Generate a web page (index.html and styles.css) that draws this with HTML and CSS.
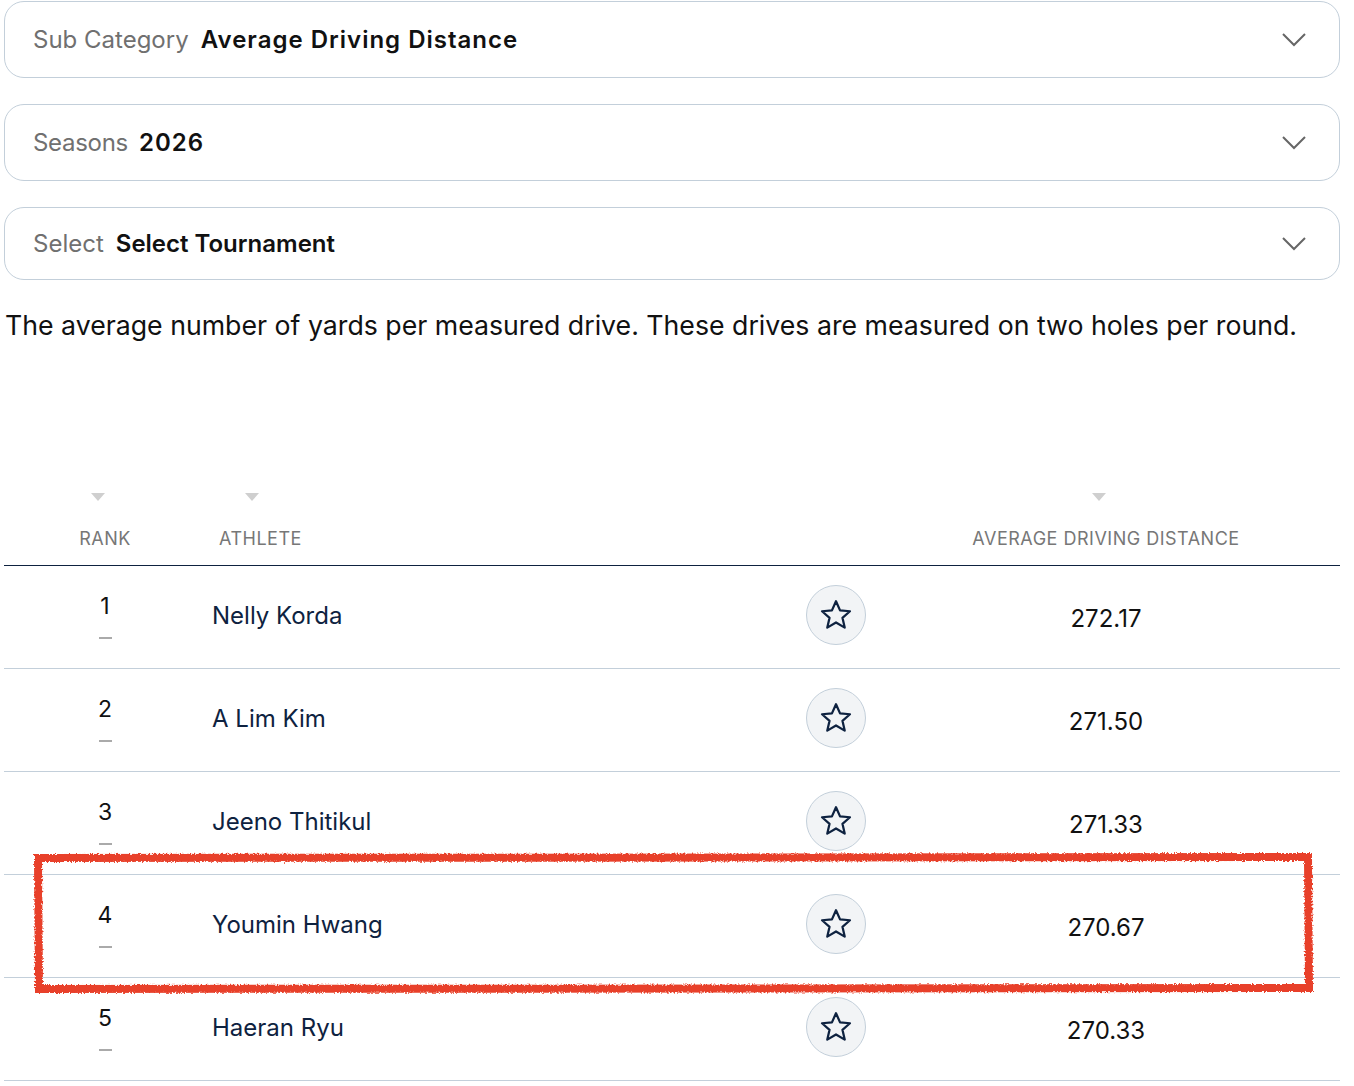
FILE: index.html
```html
<!DOCTYPE html>
<html>
<head>
<meta charset="utf-8">
<link rel="stylesheet" href="styles.css">
</head>
<body>
<div class="page">
  <div class="select s1">
    <span class="sel-label">Sub Category</span>
    <span class="sel-value">Average Driving Distance</span>
    <svg class="chev" viewBox="0 0 24 14" width="24" height="14"><path d="M1 1 L12 12 L23 1" fill="none" stroke="#666" stroke-width="2"/></svg>
  </div>
  <div class="select s2">
    <span class="sel-label">Seasons</span>
    <span class="sel-value">2026</span>
    <svg class="chev" viewBox="0 0 24 14" width="24" height="14"><path d="M1 1 L12 12 L23 1" fill="none" stroke="#666" stroke-width="2"/></svg>
  </div>
  <div class="select s3">
    <span class="sel-label">Select</span>
    <span class="sel-value tight">Select Tournament</span>
    <svg class="chev" viewBox="0 0 24 14" width="24" height="14"><path d="M1 1 L12 12 L23 1" fill="none" stroke="#666" stroke-width="2"/></svg>
  </div>
  <p class="desc">The average number of yards per measured drive. These drives are measured on two holes per round.</p>

  <div class="table">
    <div class="thead">
      <div class="th th-rank"><span class="tri"></span><span class="th-text">RANK</span></div>
      <div class="th th-name"><span class="tri"></span><span class="th-text">ATHLETE</span></div>
      <div class="th th-fav"></div>
      <div class="th th-val"><span class="tri"></span><span class="th-text">AVERAGE DRIVING DISTANCE</span></div>
    </div>
    <div class="row">
      <div class="cell rank"><span class="num">1</span><span class="dash"></span></div>
      <div class="cell name">Nelly Korda</div>
      <div class="cell fav"><span class="star-btn"><svg viewBox="0 0 24 24" width="36" height="36"><path d="M12 2.8 L14.7 8.9 L21.3 9.5 L16.3 13.9 L17.8 20.4 L12 17 L6.2 20.4 L7.7 13.9 L2.7 9.5 L9.3 8.9 Z" fill="none" stroke="#0e2240" stroke-width="1.5" stroke-linejoin="round"/></svg></span></div>
      <div class="cell val">272.17</div>
    </div>
    <div class="row">
      <div class="cell rank"><span class="num">2</span><span class="dash"></span></div>
      <div class="cell name">A Lim Kim</div>
      <div class="cell fav"><span class="star-btn"><svg viewBox="0 0 24 24" width="36" height="36"><path d="M12 2.8 L14.7 8.9 L21.3 9.5 L16.3 13.9 L17.8 20.4 L12 17 L6.2 20.4 L7.7 13.9 L2.7 9.5 L9.3 8.9 Z" fill="none" stroke="#0e2240" stroke-width="1.5" stroke-linejoin="round"/></svg></span></div>
      <div class="cell val">271.50</div>
    </div>
    <div class="row">
      <div class="cell rank"><span class="num">3</span><span class="dash"></span></div>
      <div class="cell name">Jeeno Thitikul</div>
      <div class="cell fav"><span class="star-btn"><svg viewBox="0 0 24 24" width="36" height="36"><path d="M12 2.8 L14.7 8.9 L21.3 9.5 L16.3 13.9 L17.8 20.4 L12 17 L6.2 20.4 L7.7 13.9 L2.7 9.5 L9.3 8.9 Z" fill="none" stroke="#0e2240" stroke-width="1.5" stroke-linejoin="round"/></svg></span></div>
      <div class="cell val">271.33</div>
    </div>
    <div class="row">
      <div class="cell rank"><span class="num">4</span><span class="dash"></span></div>
      <div class="cell name">Youmin Hwang</div>
      <div class="cell fav"><span class="star-btn"><svg viewBox="0 0 24 24" width="36" height="36"><path d="M12 2.8 L14.7 8.9 L21.3 9.5 L16.3 13.9 L17.8 20.4 L12 17 L6.2 20.4 L7.7 13.9 L2.7 9.5 L9.3 8.9 Z" fill="none" stroke="#0e2240" stroke-width="1.5" stroke-linejoin="round"/></svg></span></div>
      <div class="cell val">270.67</div>
    </div>
    <div class="row">
      <div class="cell rank"><span class="num">5</span><span class="dash"></span></div>
      <div class="cell name">Haeran Ryu</div>
      <div class="cell fav"><span class="star-btn"><svg viewBox="0 0 24 24" width="36" height="36"><path d="M12 2.8 L14.7 8.9 L21.3 9.5 L16.3 13.9 L17.8 20.4 L12 17 L6.2 20.4 L7.7 13.9 L2.7 9.5 L9.3 8.9 Z" fill="none" stroke="#0e2240" stroke-width="1.5" stroke-linejoin="round"/></svg></span></div>
      <div class="cell val">270.33</div>
    </div>
  </div>

  <svg class="annot" width="1300" height="156" viewBox="0 0 1300 156">
    <defs>
      <filter id="rough" x="-5%" y="-20%" width="110%" height="140%">
        <feTurbulence type="fractalNoise" baseFrequency="0.6" numOctaves="2" seed="3"/>
        <feDisplacementMap in="SourceGraphic" scale="4"/>
      </filter>
    </defs>
    <path d="M9 10 L1279 9 L1280 140 L10 141 Z" fill="none" stroke="#e8402a" stroke-width="8" filter="url(#rough)"/>
  </svg>
</div>
</body>
</html>
```
FILE: styles.css
```css
* { box-sizing: border-box; }
body {
  margin: 0;
  background: #fff;
  font-family: Inter, "Noto Sans", sans-serif;
  color: #111;
}
.page {
  position: relative;
  padding: 1px 14px 0 4px;
}
.select {
  display: flex;
  align-items: center;
  height: 77px;
  border: 1px solid #c3cfda;
  border-radius: 20px;
  padding: 0 33px 0 28px;
  margin-bottom: 26px;
}
.select.s3 { height: 73px; margin-bottom: 28px; }
.sel-label {
  font-size: 24px;
  color: #707070;
  margin-right: 12px;
}
.s2 .sel-label { letter-spacing: -0.3px; margin-right: 11px; }
.sel-value {
  font-size: 24px;
  font-weight: 600;
  letter-spacing: 1px;
  color: #111;
}
.sel-value.tight { letter-spacing: 0; }
.chev { margin-left: auto; }
.desc {
  margin: 0 0 0 1px;
  font-size: 26.7px;
  line-height: 34px;
  color: #111;
}
.table { margin-top: 128px; }
.thead {
  display: grid;
  grid-template-columns: 202px 594px 72px 1fr;
  height: 96px;
  border-bottom: 1.5px solid #0e2240;
}
.th {
  display: flex;
  flex-direction: column;
  align-items: center;
  padding-top: 23px;
}
.th-name { align-items: flex-start; padding-left: 13px; }
.th-name .tri { margin-left: 26px; }
.tri {
  width: 0; height: 0;
  border-left: 7px solid transparent;
  border-right: 7px solid transparent;
  border-top: 8px solid #cfcfcf;
  margin-bottom: 27px;
}
.th-rank .tri { margin-right: 15px; }
.th-val .tri { margin-right: 15px; }
.th-text {
  font-size: 18px;
  color: #777;
  letter-spacing: 0.5px;
}
.row {
  display: grid;
  grid-template-columns: 202px 594px 72px 1fr;
  height: 103px;
  border-bottom: 1px solid #c3cfda;
  align-items: center;
}
.cell { display: flex; align-items: center; }
.rank {
  flex-direction: column;
  justify-content: center;
  padding-bottom: 4px;
}
.num { font-size: 23px; line-height: 28px; color: #111; }
.dash {
  width: 13px;
  height: 2px;
  background: #aaa;
  margin-top: 17px;
}
.name {
  font-size: 24px;
  color: #0e2240;
  padding-left: 6px;
  padding-bottom: 4px;
}
.fav { justify-content: center; padding-bottom: 4px; }
.star-btn {
  width: 60px; height: 60px;
  border-radius: 50%;
  background: #f2f4f6;
  border: 1px solid #c3cfda;
  display: flex;
  align-items: center;
  justify-content: center;
}
.val {
  justify-content: center;
  font-size: 24px;
  color: #111;
  padding-top: 2px;
}
.annot {
  position: absolute;
  left: 29px;
  top: 848px;
  pointer-events: none;
}
```
